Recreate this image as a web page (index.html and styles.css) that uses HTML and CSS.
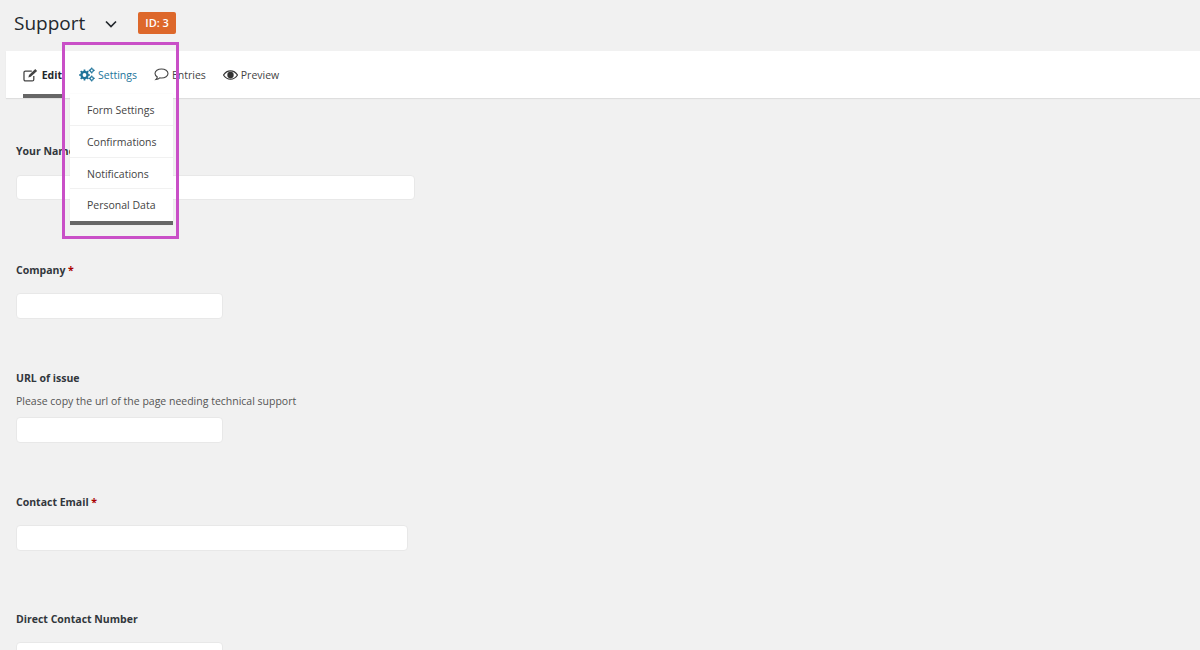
FILE: index.html
```html
<!DOCTYPE html>
<html lang="en">
<head>
  <meta charset="UTF-8">
  <title>Support</title>
  <link rel="stylesheet" href="styles.css">
</head>
<body>
  <div class="title-row">
    <h1>Support</h1>
    <svg class="chevron" width="14" height="9" viewBox="0 0 14 9"><path d="M2 1.500l5 5 5-5" fill="none" stroke="#23282d" stroke-width="1.700"/></svg>
    <span class="badge">ID: 3</span>
  </div>

  <div class="tabs">
    <a class="tab active">
      <svg width="16" height="14" viewBox="0 0 16 14"><path d="M11 8v3.500a1.500 1.500 0 0 1-1.500 1.500H2.500A1.500 1.500 0 0 1 1 11.500v-7A1.500 1.500 0 0 1 2.500 3H9" fill="none" stroke="#444" stroke-width="1.300"/><path d="M5.500 9.500l.6-2.400L12.500 1l1.900 1.800-6.500 6.100z" fill="#444"/></svg>
      Edit
    </a>
    <a class="tab settings">
      <svg width="16" height="15" viewBox="0 0 16 15"><g fill="none" stroke="#21759b"><circle cx="5.500" cy="8" r="3" stroke-width="2.400"/><path d="M5.500 2.600v10.800M.1 8h10.800M1.700 4.200l7.600 7.600M9.300 4.200l-7.600 7.600" stroke-width="1.700"/><circle cx="12.700" cy="3.400" r="1.600" stroke-width="1.300"/><path d="M12.700.4v6M9.700 3.400h6" stroke-width="1.100"/><circle cx="12.700" cy="11.400" r="1.600" stroke-width="1.300"/><path d="M12.700 8.400v6M9.700 11.400h6" stroke-width="1.100"/></g><circle cx="5.500" cy="8" r="1.900" fill="#fff"/><circle cx="12.700" cy="3.400" r="1" fill="#fff"/><circle cx="12.700" cy="11.400" r="1" fill="#fff"/></svg>
      Settings
    </a>
    <a class="tab">
      <svg width="15" height="13" viewBox="0 0 15 13"><path d="M7.500 1C3.900 1 1 3 1 5.500c0 1.400 .9 2.600 2.300 3.400-.1 1-.6 2-1.300 2.600 1.500-.1 2.900-.8 3.800-1.700.5.100 1.100.2 1.700.2 3.600 0 6.500-2 6.500-4.500S11.100 1 7.500 1z" fill="none" stroke="#444" stroke-width="1.100"/></svg>
      Entries
    </a>
    <a class="tab">
      <svg width="15" height="10" viewBox="0 0 15 10"><path d="M.5 5C2.300 2.200 4.700.8 7.500.8s5.200 1.400 7 4.200c-1.800 2.800-4.200 4.200-7 4.200S2.300 7.800.5 5z" fill="none" stroke="#333" stroke-width="1.200"/><circle cx="7.500" cy="5" r="3.200" fill="#333"/></svg>
      Preview
    </a>
  </div>

  <ul class="dropdown">
    <li>Form Settings</li>
    <li>Confirmations</li>
    <li>Notifications</li>
    <li>Personal Data</li>
  </ul>
  <div class="highlight"></div>

  <form class="form">
    <div class="field name">
      <label>Your Name</label>
      <input class="wide" type="text">
    </div>
    <div class="field company">
      <label>Company <span class="req">*</span></label>
      <input class="small" type="text">
    </div>
    <div class="field url">
      <label>URL of issue</label>
      <p class="desc">Please copy the url of the page needing technical support</p>
      <input class="small" type="text">
    </div>
    <div class="field email">
      <label>Contact Email <span class="req">*</span></label>
      <input class="medium" type="text">
    </div>
    <div class="field phone">
      <label>Direct Contact Number</label>
      <input class="small" type="text">
    </div>
  </form>
</body>
</html>
```

FILE: styles.css
```css
html, body {
  height: 650px;
  overflow: hidden;
}

body {
  margin: 0;
  position: relative;
  font-family: "Open Sans", "Noto Sans", sans-serif;
  font-size: 10.5px;
  color: #444;
  background-color: #f1f1f1;
}

.title-row {
  display: flex;
  align-items: center;
  height: 51px;
  padding: 0 0 5px 14px;
  box-sizing: border-box;
}

h1 {
  margin: 0;
  font-size: 19px;
  font-weight: 400;
  color: #23282d;
}

.chevron {
  margin-left: 19px;
  margin-top: 3px;
}

.badge {
  margin-left: 20px;
  padding: 0 7px;
  height: 22px;
  line-height: 22px;
  border-radius: 2px;
  background-color: #dd682b;
  color: #fff;
  font-size: 11px;
  font-weight: 600;
}

.tabs {
  display: flex;
  align-items: stretch;
  height: 47px;
  margin-left: 6px;
  padding-left: 17px;
  box-sizing: border-box;
  background-color: #fff;
  box-shadow: 0 1px 1px rgba(0,0,0,.08);
}

.tab {
  display: flex;
  align-items: center;
  gap: 3px;
  margin-right: 17px;
  color: #444;
}

.tab.active {
  width: 39px;
  font-weight: 700;
  color: #23282d;
  border-bottom: 4px solid #666;
  padding-top: 4px;
  box-sizing: border-box;
}

.tab.settings {
  color: #21759b;
}

.dropdown {
  position: absolute;
  left: 70px;
  top: 94px;
  width: 103px;
  margin: 0;
  padding: 0;
  list-style: none;
  background-color: #fff;
  border-bottom: 4px solid #666;
  box-shadow: 0 0 1px rgba(0,0,0,.08);
}

.dropdown li {
  height: 31.750px;
  line-height: 32px;
  padding-left: 17px;
  box-sizing: border-box;
  border-bottom: 1px solid #f1f1f1;
}

.dropdown li:last-child {
  border-bottom: 0;
}

.highlight {
  position: absolute;
  left: 62px;
  top: 42px;
  width: 117px;
  height: 197px;
  box-sizing: border-box;
  border: 3px solid #c94fc7;
}

.form {
  padding-left: 16px;
}

.field label {
  display: block;
  font-weight: 700;
  color: #32373c;
  line-height: 16px;
}

.req {
  color: #a00;
}

.desc {
  margin: 7px 0 0;
  line-height: 16px;
  color: #555;
}

input {
  display: block;
  height: 26px;
  margin-top: 15px;
  padding: 0;
  box-sizing: border-box;
  background-color: #fff;
  border: 1px solid #e8e8e8;
  border-radius: 4px;
}

.field.name { padding-top: 45px; }
.field.company { padding-top: 62px; }
.field.url { padding-top: 51px; }
.field.email { padding-top: 51px; }
.field.phone { padding-top: 60px; }

.field.name input { margin-top: 16px; height: 25px; }
.field.url input { margin-top: 8px; }
.field.phone input { margin-top: 15px; }

.wide { width: 399px; }
.medium { width: 392px; }
.small { width: 207px; }
```
